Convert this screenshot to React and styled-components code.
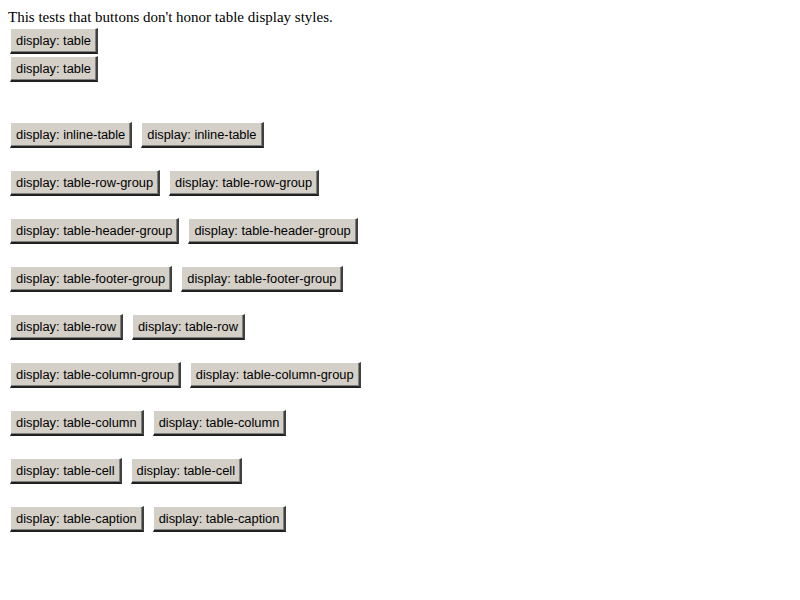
import * as React from "react"
import styled, { createGlobalStyle } from "styled-components"

const Global = createGlobalStyle`
  body {
    margin: 0;
    background: #fff;
  }
`

const Page = styled.div`
  padding: 8px;
  display: flex;
  flex-direction: column;
  align-items: flex-start;
`

const Caption = styled.div`
  font-family: "Liberation Serif", "Times New Roman", serif;
  font-size: 15px;
  line-height: 18px;
  color: #000;
  margin-bottom: 2px;
`

const BlockStack = styled.div`
  display: flex;
  flex-direction: column;
  align-items: flex-start;
  gap: 2px;
  padding-left: 2px;
  margin-bottom: 40px;
`

const Rows = styled.div`
  display: flex;
  flex-direction: column;
  gap: 22px;
  padding-left: 2px;
`

const Row = styled.div`
  display: flex;
  gap: 9px;
`

const Button = styled.button`
  box-sizing: border-box;
  height: 26px;
  margin: 0;
  padding: 0 5px;
  font-family: "Liberation Sans", Arial, sans-serif;
  font-size: 12.85px;
  color: #000;
  background: #d4d0c8;
  border-style: solid;
  border-width: 1px 2px 2px 1px;
  border-color: #ffffff #404040 #202020 #ffffff;
  box-shadow: inset -1px -1px 0 #808080;
  white-space: nowrap;
`

const kinds = [
  "inline-table",
  "table-row-group",
  "table-header-group",
  "table-footer-group",
  "table-row",
  "table-column-group",
  "table-column",
  "table-cell",
  "table-caption",
]

//Two of each display value, side by side
const App = () => (
  <Page>
    <Global />
    <Caption>This tests that buttons don't honor table display styles.</Caption>
    <BlockStack>
      <Button>display: table</Button>
      <Button>display: table</Button>
    </BlockStack>
    <Rows>
      {kinds.map((k) => (
        <Row key={k}>
          <Button>display: {k}</Button>
          <Button>display: {k}</Button>
        </Row>
      ))}
    </Rows>
  </Page>
)

export default App
